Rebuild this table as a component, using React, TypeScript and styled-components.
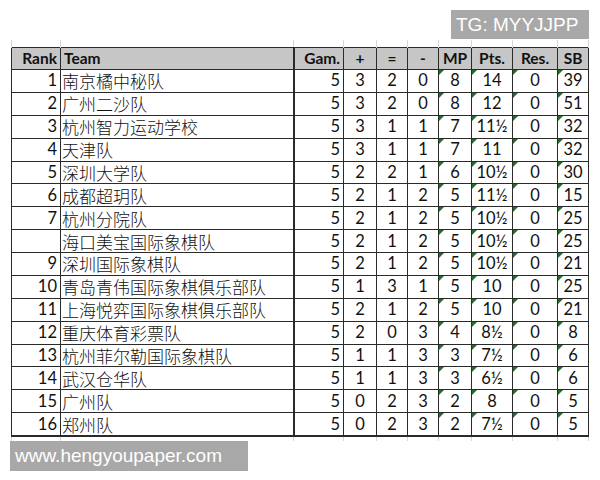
import React from "react";
import styled, { createGlobalStyle } from "styled-components";

const Global = createGlobalStyle`
  html, body { margin: 0; padding: 0; background: #ffffff; }
  body { width: 600px; height: 480px; overflow: hidden; }
`;

const Page = styled.div`
  width: 600px;
  height: 480px;
  display: flex;
  flex-direction: column;
  background: #fff;
`;

const TopBar = styled.div`
  display: flex;
  justify-content: flex-end;
  padding: 10px 11px 0 0;
  height: 40px;
  box-sizing: border-box;
`;

const Watermark = styled.div<{ $w: number; $h: number }>`
  width: ${(p) => p.$w}px;
  height: ${(p) => p.$h}px;
  background: #a8a8a8;
  color: #ffffff;
  font-family: "Liberation Sans", Arial, sans-serif;
  font-size: 19px;
  display: flex;
  align-items: center;
  box-sizing: border-box;
  padding-left: 5px;
`;

const BottomBar = styled.div`
  display: flex;
  padding-left: 10px;
`;

const Sheet = styled.table`
  margin-left: 11px;
  border-collapse: collapse;
  table-layout: fixed;
  width: 577px;
  font-family: Lato, "Open Sans", sans-serif;
  color: #111;
`;

const GhostCell = styled.td<{ $h: number }>`
  height: ${(p) => p.$h}px;
  padding: 0;
  border-left: 1px solid #d6d6d6;
  border-right: 1px solid #d6d6d6;
`;

const HeadCell = styled.th<{ $align: string; $thick?: boolean }>`
  height: 21px;
  padding: 0 3px;
  background: #c6c6c6;
  border: 1px solid #2a2a2a;
  border-right-width: ${(p) => (p.$thick ? 2 : 1)}px;
  font-size: 15.5px;
  font-weight: 700;
  line-height: 19px;
  text-align: ${(p) => p.$align};
  white-space: nowrap;
  overflow: hidden;
`;

const Cell = styled.td<{ $align: string; $thick?: boolean; $flag?: boolean; $cjk?: boolean; $last?: boolean }>`
  position: relative;
  height: 21.875px;
  padding: 0 ${(p) => (p.$cjk ? 1 : 3)}px;
  border: 1px solid #2a2a2a;
  border-right-width: ${(p) => (p.$thick ? 2 : 1)}px;
  border-bottom-width: ${(p) => (p.$last ? 2 : 1)}px;
  font-family: ${(p) => (p.$cjk ? '"Noto Sans CJK SC", sans-serif' : 'Lato, "Open Sans", sans-serif')};
  font-size: ${(p) => (p.$cjk ? 17 : 16.5)}px;
  font-weight: ${(p) => (p.$cjk ? 300 : 400)};
  line-height: 19px;
  text-align: ${(p) => p.$align};
  white-space: nowrap;
  overflow: hidden;
  vertical-align: middle;
  &::before {
    content: "";
    display: ${(p) => (p.$flag ? "block" : "none")};
    position: absolute;
    left: 0;
    top: 0;
    width: 0;
    height: 0;
    border-top: 5px solid #1f6e2c;
    border-right: 5px solid transparent;
  }
`;

type Col = { key: string; w: number; align: string; thick?: boolean; flag?: boolean };

const cols: Col[] = [
  { key: "Rank", w: 49, align: "right" },
  { key: "Team", w: 233, align: "left", thick: true },
  { key: "Gam.", w: 50, align: "right" },
  { key: "+", w: 33, align: "center" },
  { key: "=", w: 31, align: "center" },
  { key: "-", w: 31, align: "center" },
  { key: "MP", w: 33, align: "center", flag: true },
  { key: "Pts.", w: 41, align: "center", flag: true },
  { key: "Res.", w: 45, align: "center", flag: true },
  { key: "SB", w: 31, align: "center", flag: true },
];

const rows: string[][] = [
  ["1", "南京橘中秘队", "5", "3", "2", "0", "8", "14", "0", "39"],
  ["2", "广州二沙队", "5", "3", "2", "0", "8", "12", "0", "51"],
  ["3", "杭州智力运动学校", "5", "3", "1", "1", "7", "11½", "0", "32"],
  ["4", "天津队", "5", "3", "1", "1", "7", "11", "0", "32"],
  ["5", "深圳大学队", "5", "2", "2", "1", "6", "10½", "0", "30"],
  ["6", "成都超玥队", "5", "2", "1", "2", "5", "11½", "0", "15"],
  ["7", "杭州分院队", "5", "2", "1", "2", "5", "10½", "0", "25"],
  ["", "海口美宝国际象棋队", "5", "2", "1", "2", "5", "10½", "0", "25"],
  ["9", "深圳国际象棋队", "5", "2", "1", "2", "5", "10½", "0", "21"],
  ["10", "青岛青伟国际象棋俱乐部队", "5", "1", "3", "1", "5", "10", "0", "25"],
  ["11", "上海悦弈国际象棋俱乐部队", "5", "2", "1", "2", "5", "10", "0", "21"],
  ["12", "重庆体育彩票队", "5", "2", "0", "3", "4", "8½", "0", "8"],
  ["13", "杭州菲尔勒国际象棋队", "5", "1", "1", "3", "3", "7½", "0", "6"],
  ["14", "武汉仓华队", "5", "1", "1", "3", "3", "6½", "0", "6"],
  ["15", "广州队", "5", "0", "2", "3", "2", "8", "0", "5"],
  ["16", "郑州队", "5", "0", "2", "3", "2", "7½", "0", "5"],
];

export default function App() {
  return (
    <Page>
      <Global />
      <TopBar>
        <Watermark $w={138} $h={29}>TG: MYYJJPP</Watermark>
      </TopBar>
      <Sheet>
        <colgroup>
          {cols.map((c) => (
            <col key={c.key} style={{ width: c.w }} />
          ))}
        </colgroup>
        <tbody>
          <tr>
            {cols.map((c) => (
              <GhostCell key={c.key} $h={7} />
            ))}
          </tr>
          <tr>
            {cols.map((c) => (
              <HeadCell key={c.key} $align={c.align} $thick={c.thick}>
                {c.key}
              </HeadCell>
            ))}
          </tr>
          {rows.map((r, i) => (
            <tr key={i}>
              {r.map((v, j) => (
                <Cell
                  key={j}
                  $align={cols[j].align}
                  $thick={cols[j].thick}
                  $flag={cols[j].flag}
                  $cjk={j === 1}
                  $last={i === rows.length - 1}
                >
                  {v}
                </Cell>
              ))}
            </tr>
          ))}
          <tr>
            {cols.map((c) => (
              <GhostCell key={c.key} $h={4} />
            ))}
          </tr>
        </tbody>
      </Sheet>
      <BottomBar>
        <Watermark $w={238} $h={30}>www.hengyoupaper.com</Watermark>
      </BottomBar>
    </Page>
  );
}
